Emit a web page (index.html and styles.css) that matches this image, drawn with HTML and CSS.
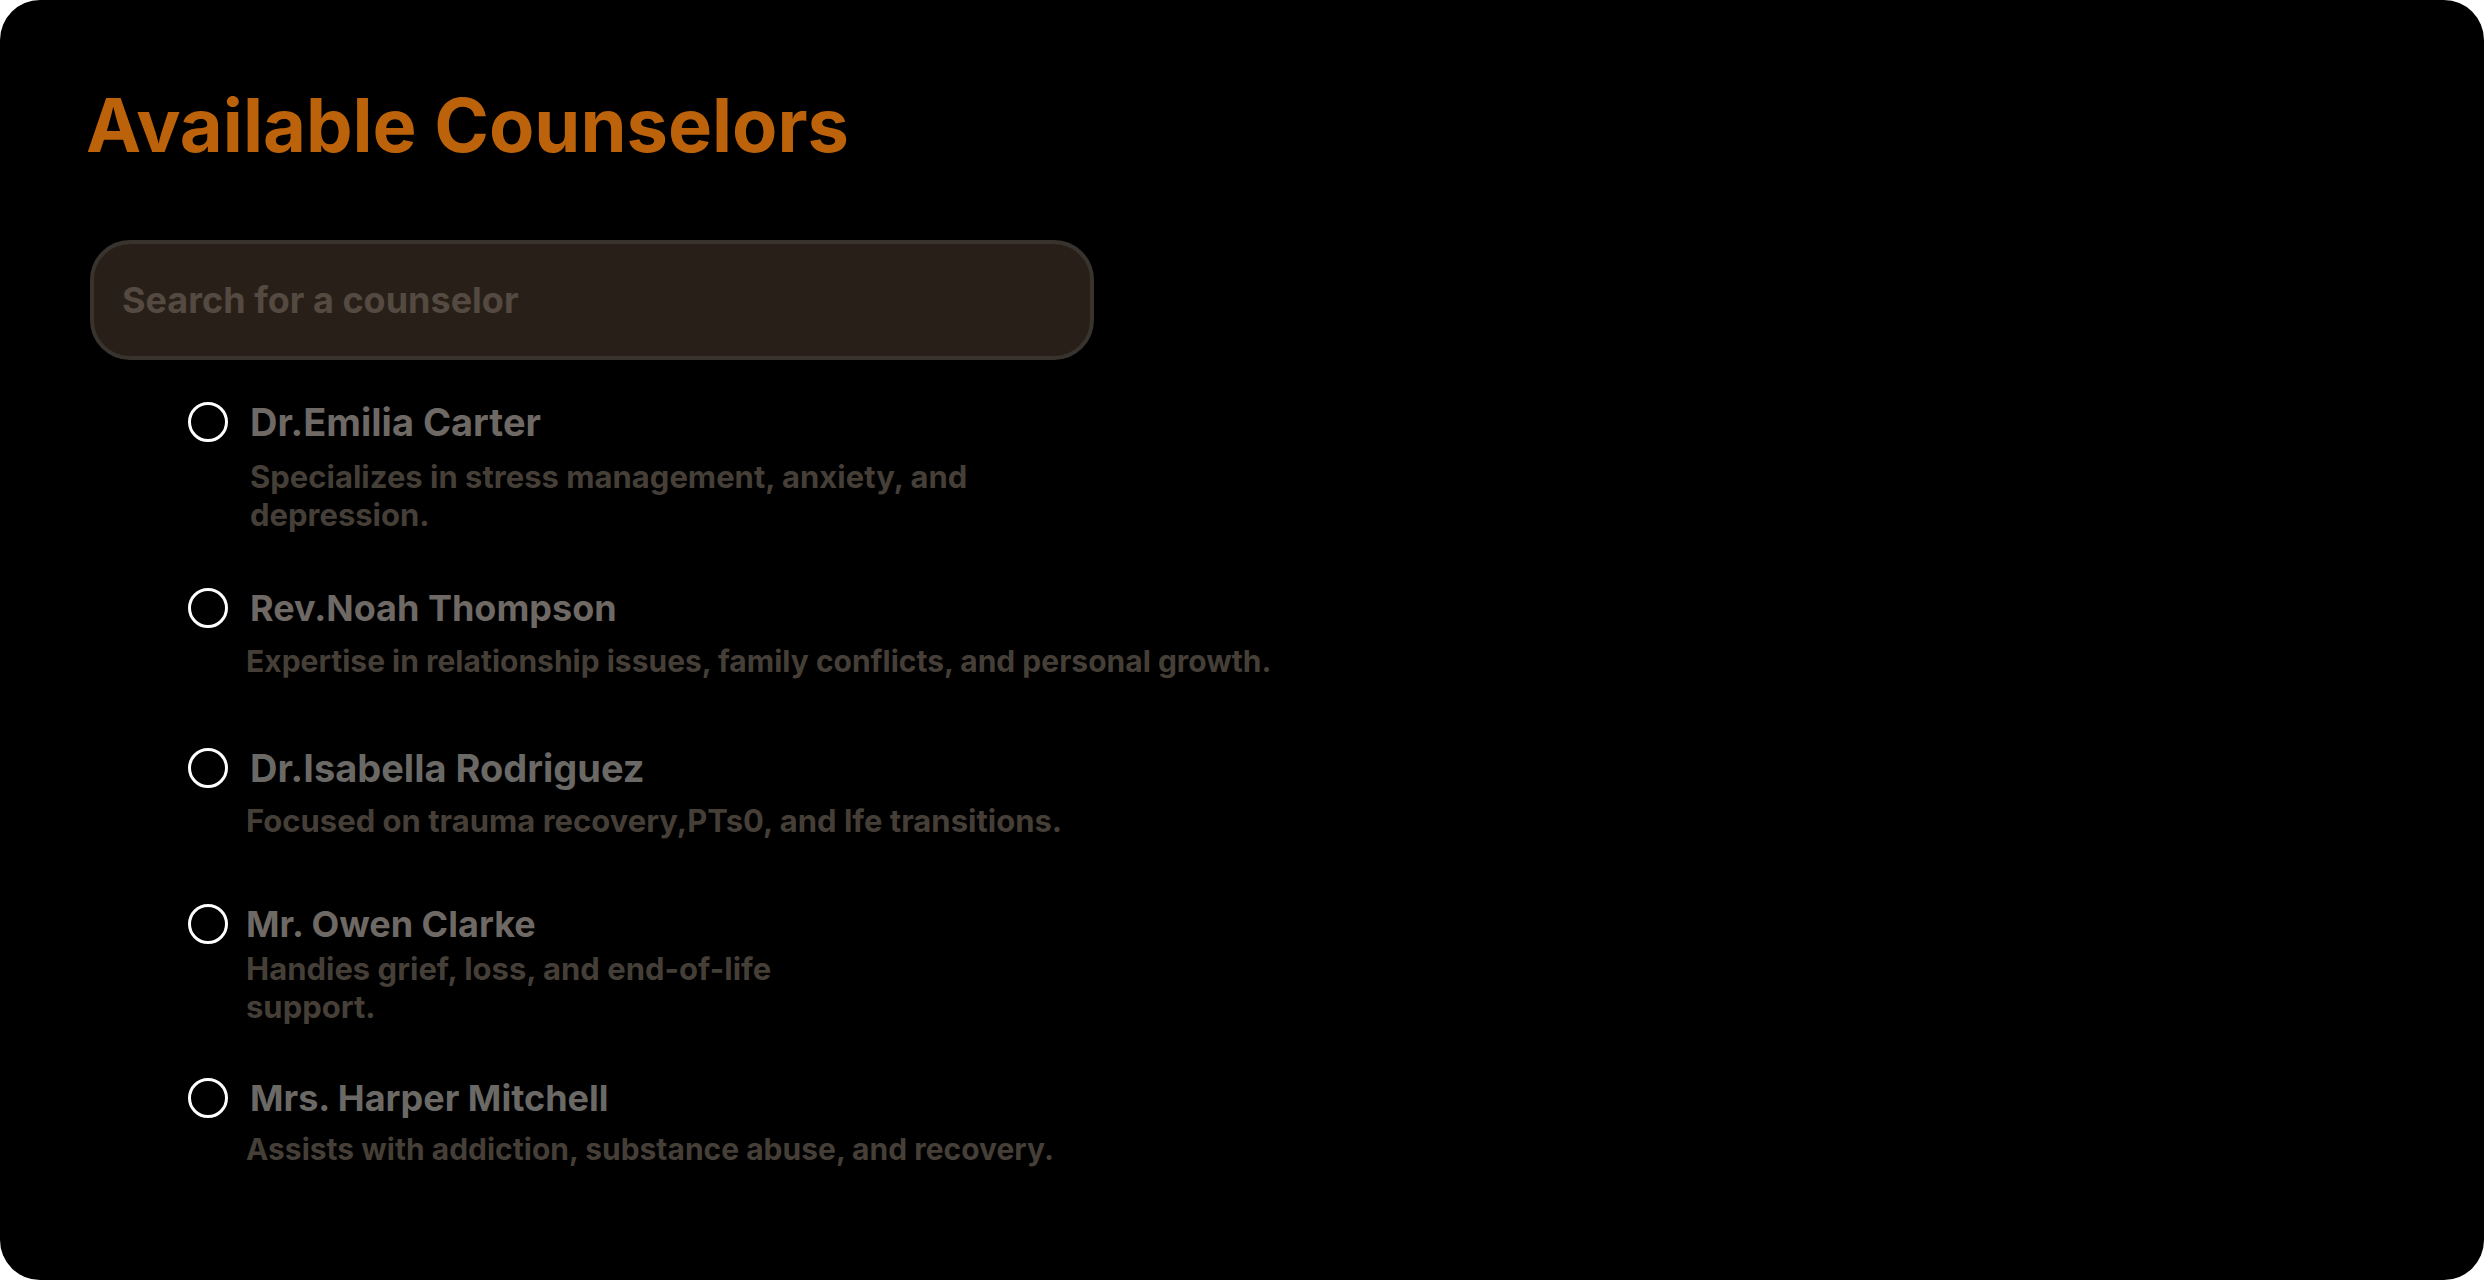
FILE: index.html
```html
<!DOCTYPE html>
<html lang="en">
<head>
<meta charset="utf-8">
<title>Available Counselors</title>
<link rel="stylesheet" href="styles.css">
</head>
<body>
<main class="panel">
  <h1 class="title">Available Counselors</h1>
  <form class="finder">
    <input class="search" type="search" placeholder="Search for a counselor" aria-label="Search for a counselor">
    <div class="list" role="radiogroup" aria-label="Counselors">
      <div class="item item-first">
        <input class="radio" type="radio" name="counselor" id="emilia">
        <div class="info info-loose">
          <label class="name" for="emilia">Dr.Emilia Carter</label>
          <p class="bio bio-large bio-wide">Specializes in stress management, anxiety, and depression.</p>
        </div>
      </div>
      <div class="item item-second">
        <input class="radio" type="radio" name="counselor" id="noah">
        <div class="info info-medium">
          <label class="name name-small" for="noah">Rev.Noah Thompson</label>
          <p class="bio bio-out">Expertise in relationship issues, family conflicts, and personal growth.</p>
        </div>
      </div>
      <div class="item item-third">
        <input class="radio" type="radio" name="counselor" id="isabella">
        <div class="info info-medium">
          <label class="name name-gray" for="isabella">Dr.Isabella Rodriguez</label>
          <p class="bio bio-large bio-out">Focused on trauma recovery,PTs0, and lfe transitions.</p>
        </div>
      </div>
      <div class="item item-fourth">
        <input class="radio" type="radio" name="counselor" id="owen">
        <div class="info">
          <label class="name name-small name-out" for="owen">Mr. Owen Clarke</label>
          <p class="bio bio-large bio-out bio-narrow">Handies grief, loss, and end-of-life support.</p>
        </div>
      </div>
      <div class="item item-fifth">
        <input class="radio" type="radio" name="counselor" id="harper">
        <div class="info info-tight">
          <label class="name name-small name-gray" for="harper">Mrs. Harper Mitchell</label>
          <p class="bio bio-out">Assists with addiction, substance abuse, and recovery.</p>
        </div>
      </div>
    </div>
  </form>
</main>
</body>
</html>
```
FILE: styles.css
```css
* { box-sizing: border-box; }
body { margin: 0; background: #fff; font-family: Inter, sans-serif; }
.panel { min-height: 100vh; padding: 80px 86px; background: #000; border-radius: 40px; }
.title { margin: 0; font-size: 74px; line-height: 90px; font-weight: 700; color: #bb620a; }
.finder { margin: 70px 0 0 4px; }
.search { display: block; width: 100%; max-width: 1004px; height: 120px; margin: 0; padding: 0 28px; border: 4px solid #38332d; border-radius: 40px; background: #282018; color: #74675c; font: 700 36px/44px Inter, sans-serif; outline: 0; }
.search::placeholder { color: #544a41; opacity: 1; }
.list { padding: 36px 0 0 98px; }
.item { display: flex; align-items: flex-start; gap: 22px; }
.item-first { min-height: 186px; }
.item-second { min-height: 160px; }
.item-third { min-height: 156px; }
.item-fourth { min-height: 174px; }
.radio { appearance: none; flex: none; width: 40px; height: 40px; margin: 6px 0 0; border: 3px solid #fff; border-radius: 50%; }
.info { display: flex; flex-direction: column; }
.info-tight { gap: 6px; }
.info-medium { gap: 8px; }
.info-loose { gap: 10px; }
.name { font-size: 38px; line-height: 52px; font-weight: 700; color: #6e6965; }
.name-small { font-size: 36px; }
.name-gray { color: #6b6966; }
.bio { margin: 0; font-size: 30px; line-height: 38px; font-weight: 700; color: #453f38; }
.bio-large { font-size: 31px; }
.bio-wide { max-width: 780px; }
.bio-narrow { max-width: 600px; }
.bio-out, .name-out { margin-left: -4px; }
```
